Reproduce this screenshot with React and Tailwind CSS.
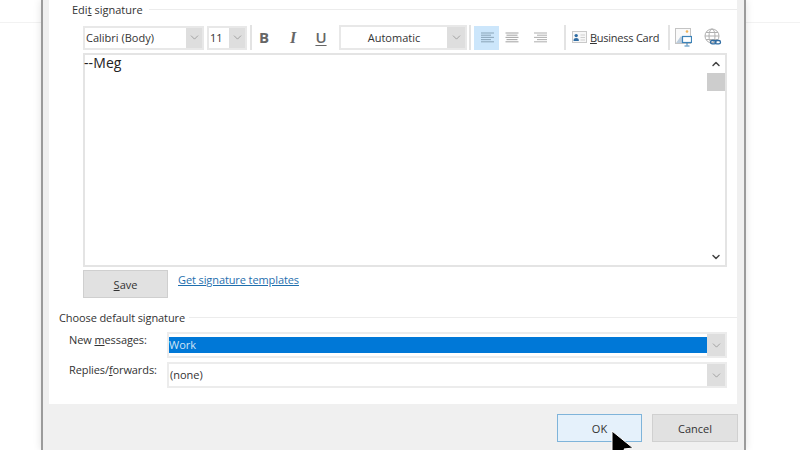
import { ChevronDown, ChevronUp } from "lucide-react";

const font = "font-['Open_Sans','Liberation_Sans',sans-serif]";

function DropArrow({ className = "w-[16px]" }) {
  return (
    <div className={`flex shrink-0 items-center justify-center self-stretch bg-[#dedede] ${className}`}>
      <ChevronDown className="h-[13px] w-[13px] text-[#858585]" strokeWidth={1.25} />
    </div>
  );
}

function Combo({ className, children, textClass = "pl-[1px]" }) {
  return (
    <div className={`flex h-[24px] items-stretch border-2 border-[#e8e8e8] bg-white ${className}`}>
      <div className={`flex-1 self-center text-[11px] leading-none text-[#333] ${textClass}`}>{children}</div>
      <DropArrow />
    </div>
  );
}

function Sep({ className = "" }) {
  return <div className={`h-[25px] w-[2px] shrink-0 bg-[#e3e3e3] ${className}`} />;
}

function AlignIcon({ kind, color }) {
  const rows = [0, 1, 2, 3, 4];
  const x = (w) => (kind === "left" ? 1 : kind === "center" ? (14 - w) / 2 : 14 - w);
  return (
    <svg width="14" height="11" viewBox="0 0 14 11" fill="none" stroke={color} strokeWidth="1.1">
      {rows.map((r) => {
        const w = r % 2 === 0 ? 13 : kind === "center" ? 11 : 10;
        return <line key={r} x1={x(w)} x2={x(w) + w} y1={r * 2.2 + 1} y2={r * 2.2 + 1} />;
      })}
    </svg>
  );
}

function Toolbar() {
  return (
    <div className="flex h-[25px] items-center pl-[34px]">
      <Combo className="w-[121px]">Calibri (Body)</Combo>
      <Combo className="ml-[3px] w-[40px]">11</Combo>
      <Sep className="ml-[3px]" />
      <div className="ml-[-2px] flex w-[28px] justify-center text-[15px] font-bold text-[#666]">B</div>
      <div className="flex w-[30px] justify-center font-['Liberation_Serif',serif] text-[16px] font-bold italic text-[#666]">I</div>
      <div className="flex w-[26px] justify-center text-[15px] font-semibold text-[#666] underline underline-offset-2">U</div>
      <div className="ml-[5px] flex h-[25px] w-[128px] items-stretch border-2 border-[#e8e8e8] bg-white">
        <div className="flex-1 self-center text-center text-[11px] leading-none text-[#333]">Automatic</div>
        <DropArrow className="w-[18px]" />
      </div>
      <Sep className="ml-[2px]" />
      <div className="ml-[3px] flex h-[24px] w-[25px] items-center justify-center bg-[#cce6fb]">
        <AlignIcon kind="left" color="#8fa9bd" />
      </div>
      <div className="flex w-[25px] justify-center"><AlignIcon kind="center" color="#aaa" /></div>
      <div className="ml-[3px] flex w-[25px] justify-center"><AlignIcon kind="right" color="#b4b4b4" /></div>
      <Sep className="ml-[12px]" />
      <svg className="ml-[6px] shrink-0" width="15" height="13" viewBox="0 0 15 13">
        <rect x="0.5" y="0.5" width="14" height="11" fill="#f7f7f7" stroke="#c9c9c9" />
        <circle cx="4.2" cy="4.6" r="1.7" fill="#2f6ca3" />
        <path d="M1.5 10c0-2.4 1.2-3 2.7-3s2.7.6 2.7 3z" fill="#2f6ca3" />
        <path d="M8.5 4h4.5M8.5 6.5h4.5M8.5 9h4.5" stroke="#cfcfcf" />
      </svg>
      <span className="ml-[3px] w-[69px] whitespace-nowrap text-[11px] leading-none tracking-[-0.25px] text-[#333]"><span className="underline">B</span>usiness Card</span>
      <Sep className="ml-[9px]" />
      <svg className="ml-[5px] shrink-0" width="17" height="19" viewBox="0 0 17 19">
        <rect x="0.5" y="0.5" width="15" height="15" fill="#fafafa" stroke="#c4c4c4" />
        <path d="M1 15l5-7 5 7z" fill="#bccddd" />
        <circle cx="12" cy="3.5" r="1.3" fill="#f0b35a" />
        <rect x="7.5" y="8.5" width="9" height="6" fill="#fff" stroke="#3d83b8" strokeWidth="1.2" />
        <path d="M12 15v2.5M9.5 18h5" stroke="#3d83b8" />
      </svg>
      <svg className="ml-[12px] shrink-0" width="18" height="20" viewBox="0 0 18 20" fill="none">
        <circle cx="8" cy="8" r="7" stroke="#b0b0b0" />
        <ellipse cx="8" cy="8" rx="3" ry="7" stroke="#b0b0b0" />
        <path d="M1 8h14M2 4.5h12M2 11.5h12" stroke="#b0b0b0" />
        <rect x="6.5" y="12.5" width="5.5" height="3.4" rx="1.7" stroke="#2f6ca3" strokeWidth="1.3" />
        <rect x="11" y="12.5" width="5.5" height="3.4" rx="1.7" stroke="#2f6ca3" strokeWidth="1.3" />
      </svg>
    </div>
  );
}

function Editor() {
  return (
    <div className="ml-[34px] mt-[3px] flex h-[214px] w-[644px] border-2 border-[#e4e4e4] bg-white">
      <div className="ml-[-1px] mt-[-1px] flex-1 text-[14px] leading-[17px] tracking-[0.1px] text-[#222]">--Meg</div>
      <div className="flex w-[18px] flex-col items-center">
        <div className="flex h-[18px] items-center justify-center">
          <ChevronUp className="h-[12px] w-[12px] text-[#444]" strokeWidth={3} />
        </div>
        <div className="h-[18px] w-full bg-[#cdcdcd]" />
        <div className="flex-1" />
        <div className="flex h-[16px] items-center justify-center">
          <ChevronDown className="h-[12px] w-[12px] text-[#444]" strokeWidth={3} />
        </div>
      </div>
    </div>
  );
}

function SelectRow({ label, selected, children }) {
  return (
    <div className="flex h-[26px] items-start pl-[20px]">
      <div className="w-[98px] text-[11px] leading-[16px] tracking-[-0.1px] text-[#333]">{label}</div>
      <div className="flex h-[26px] w-[560px] items-stretch border-2 border-[#ececec] bg-white">
        <div className="flex flex-1 items-center">
          <div className={selected
            ? "flex h-[16px] w-full items-center bg-[#0078d7] text-[11px] text-[#cfe4f6]"
            : "pl-[1px] text-[11px] text-[#333]"}>
            {children}
          </div>
        </div>
        <DropArrow className="w-[18px]" />
      </div>
    </div>
  );
}

export default function App() {
  return (
    <div className={`flex h-[450px] w-[800px] overflow-hidden bg-white ${font}`}>
      {/* page behind the dialog */}
      <div className="h-[23px] w-[41px] shrink-0 border-b border-[#f2f2f2]" />
      <div className="relative flex h-full w-[705px] shrink-0 flex-col border-x-2 border-[#9b9b9b] bg-[#f0f0f0] px-[6px] shadow-[0_0_8px_rgba(0,0,0,0.12)]">
        {/* White panel */}
        <div className="h-[404px] w-[688px] shrink-0 bg-white">
          <div className="flex h-[25px] items-start pl-[23px] pt-[2px]">
            <span className="text-[11px] leading-[15px] text-[#333]">Edi<span className="underline">t</span> signature</span>
            <div className="ml-[6px] mt-[7px] h-px flex-1 bg-[#ececec]" />
          </div>
          <Toolbar />
          <Editor />
          <div className="mt-[3px] flex items-start pl-[34px]">
            <button className="h-[28px] w-[85px] border border-[#cfcfcf] bg-[#e1e1e1] pt-[2px] text-[11px] text-[#333]">
              <span className="underline">S</span>ave
            </button>
            <a className="ml-[10px] mt-[2px] text-[11px] leading-[16px] tracking-[-0.1px] text-[#1f6fae] underline">Get signature templates</a>
          </div>
          <div className="mt-[12px] flex h-[15px] items-center pl-[10px]">
            <span className="text-[11px] leading-none tracking-[-0.1px] text-[#333]">Choose default signature</span>
            <div className="ml-[4px] h-px flex-1 bg-[#ececec]" />
          </div>
          <div className="mt-[7px] flex flex-col gap-[4px]">
            <SelectRow label={<>New <span className="underline">m</span>essages:</>} selected>Work</SelectRow>
            <SelectRow label={<>Replies/<span className="underline">f</span>orwards:</>}>(none)</SelectRow>
          </div>
        </div>
        {/* Footer buttons */}
        <div className="mt-[10px] flex justify-end gap-[10px]">
          <button className="h-[28px] w-[85px] border border-[#7fb4da] bg-[#e5f1fb] pt-[2px] text-[11px] text-[#333]">OK</button>
          <button className="h-[28px] w-[86px] border border-[#d0d0d0] bg-[#e1e1e1] pt-[2px] text-[11px] text-[#333]">Cancel</button>
        </div>
        {/* Mouse cursor */}
        <svg className="absolute left-[567px] top-[430px]" width="26" height="34" viewBox="0 0 26 34">
          <path d="M2 1l0 26 7-6 5 11 5-2-5-11 9-1z" fill="#000" stroke="#fff" strokeWidth="1" />
        </svg>
      </div>
      <div className="h-[23px] flex-1 border-b border-[#f2f2f2]" />
    </div>
  );
}
